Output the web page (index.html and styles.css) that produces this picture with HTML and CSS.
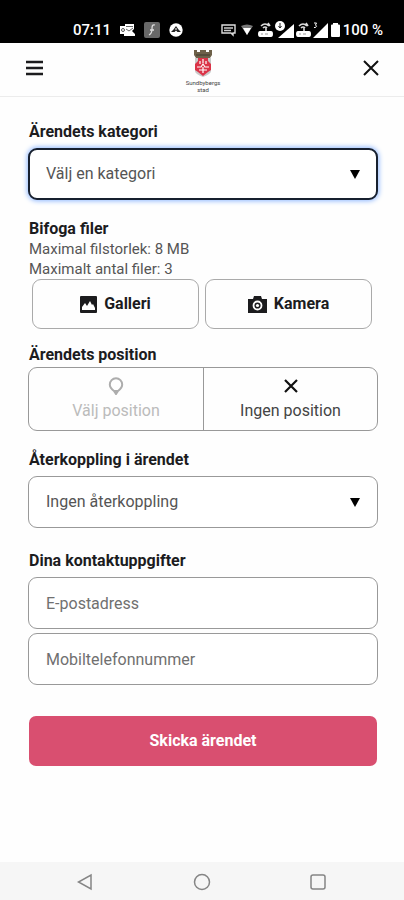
FILE: index.html
```html
<!DOCTYPE html>
<html lang="sv">
<head>
<meta charset="utf-8">
<meta name="viewport" content="width=device-width, initial-scale=1">
<title>Nytt ärende</title>
<link rel="stylesheet" href="styles.css">
</head>
<body>
<div class="status">
  <div class="status-group">
    <span>07:11</span>
    <svg width="15" height="14" viewBox="0 0 15 14"><path fill="#fff" d="M0 3h5V1h9v5l-2 2 3 3v2H4v-2H0z"/><path d="M6 3.500h7M6 6l3 2 4-3" fill="none" stroke="#666"/><circle cx="3" cy="7" r="1.500" fill="none" stroke="#555"/></svg>
    <svg width="16" height="16" viewBox="0 0 16 16"><rect width="16" height="16" rx="2" fill="#686868"/><path d="M11 3c-3-1-3 2-3 4s-1 5-3 6M6 8h4" fill="none" stroke="#ddd" stroke-width="1.3"/></svg>
    <svg width="14" height="14" viewBox="0 0 14 14"><circle cx="7" cy="7" r="6.7" fill="#fff"/><path d="M7 3l2.500 3.500L12 9H8.500L7 7.500 5.500 9H2l2.500-2.500z" fill="#222"/><path d="M7 5v2" stroke="#fff"/></svg>
  </div>
  <div class="status-group status-right">
    <svg width="15" height="14" viewBox="0 0 15 14"><path d="M1 2h13v8h-2v2l-2-2H1z" fill="none" stroke="#ddd" stroke-width="1.4"/><path d="M3 5h9M3 7.500h7" stroke="#ccc" stroke-width="1.3"/></svg>
    <svg class="wifi" width="12" height="12" viewBox="0 0 12 12"><path d="M0 2q6-3 12 0L6 11z" fill="#777"/><path d="M2 4h8l-4 7z" fill="#fff"/></svg>
    <svg width="15" height="15" viewBox="0 0 15 15"><path d="M2 9h11q2 0 2 3t-2 3H2q-2 0-2-3t2-3z" fill="#fff"/><path d="M3 4q4-4 8 0M5 6q2-2 4 0M8 5v4M10 1l2 3" fill="none" stroke="#ddd" stroke-width="1.6"/><path d="M3 12h2M7 12h3" stroke="#999"/></svg>
    <svg width="19" height="18" viewBox="0 0 19 18"><path d="M19 3v14H3z" fill="#fff"/><circle cx="5" cy="5" r="5" fill="#fff"/><path d="M5 2v5M3.500 5L5 7l1.500-2" fill="none" stroke="#222"/></svg>
    <svg width="15" height="15" viewBox="0 0 15 15"><path d="M2 9h11q2 0 2 3t-2 3H2q-2 0-2-3t2-3z" fill="#fff"/><path d="M3 4q4-4 8 0M5 6q2-2 4 0M8 5v4M10 1l2 3" fill="none" stroke="#ddd" stroke-width="1.6"/><path d="M3 12h2M7 12h3" stroke="#999"/></svg>
    <svg width="15" height="16" viewBox="0 0 15 16"><path d="M15 1v15H0z" fill="#fff"/><path d="M1 1h2.500L2.500 3q2 1 0 2.500H1" fill="none" stroke="#fff"/></svg>
    <svg class="battery" width="9" height="14" viewBox="0 0 9 14"><path d="M2 0h5v1.500h1q1 0 1 1V13q0 1-1 1H1q-1 0-1-1V2.500q0-1 1-1h1z" fill="#fff"/></svg>
    <span>100 %</span>
  </div>
</div>

<header class="topbar">
  <button class="icon-button" type="button" aria-label="Meny"><svg width="18" height="16" viewBox="0 0 18 16"><path d="M0 2h17M0 8h17M0 14h17" stroke="#1c1c1e" stroke-width="2.500"/></svg></button>
  <div class="brand">
    <svg width="18" height="27" viewBox="0 0 18 27"><path d="M0 0h3v2h3V0h6v2h3V0h3v5l-2 3H2L0 5z" fill="#6d6049"/><path d="M2 5h14" stroke="#3f382c"/><path d="M1 8h16v13q0 3-8 6-8-3-8-6z" fill="#c9c9c9"/><path d="M4 8h10v3l3 3v6l-3 2-5 4-5-4-3-2v-6l3-3z" fill="#db3448"/><path d="M9 9v4M3 17h4l2-3 2 3h4M5 20h8M9 17v6M6 11v3M12 11v3" fill="none" stroke="#fff" stroke-width="1.200"/></svg>
    <span>Sundbybergs<br>stad</span>
  </div>
  <button class="icon-button" type="button" aria-label="Stäng"><svg width="16" height="16" viewBox="0 0 16 16"><path d="M1 1l14 14M15 1L1 15" stroke="#111" stroke-width="2"/></svg></button>
</header>

<form class="form">
  <section class="group">
    <label class="heading" for="category">Ärendets kategori</label>
    <div class="select-box">
      <select class="field active" id="category"><option>Välj en kategori</option></select>
      <svg width="10" height="10" viewBox="0 0 10 10"><path d="M0 1h10L5 10z"/></svg>
    </div>
  </section>

  <section class="group files">
    <h2 class="heading">Bifoga filer</h2>
    <p>Maximal filstorlek: 8 MB</p>
    <p>Maximalt antal filer: 3</p>
    <div class="file-buttons">
      <button type="button"><svg width="17" height="17" viewBox="0 0 17 17"><path d="M1 0h15q1 0 1 1v15q0 1-1 1H1q-1 0-1-1V1q0-1 1-1z" fill="#1c1c1e"/><path d="M2 14V11l3-4 2 3 3-5 2 4 1-1 2 4v2z" fill="#fff"/></svg>Galleri</button>
      <button type="button"><svg width="19" height="17" viewBox="0 0 19 17"><path d="M0 3h5l1-3h7l1 3h5v14H0z" fill="#1c1c1e"/><circle cx="9.500" cy="9.500" r="4" fill="#1c1c1e" stroke="#fff" stroke-width="1.800"/><circle cx="9.500" cy="9.500" r="1.600" fill="#fff"/></svg>Kamera</button>
    </div>
  </section>

  <section class="group position">
    <h2 class="heading">Ärendets position</h2>
    <div class="segmented">
      <button class="muted" type="button"><svg width="16" height="18" viewBox="0 0 16 18"><path d="M8 1.300a6.200 6.200 0 0 0-6.200 6.200c0 3 2.200 5 4.200 6.500L8 17l2-3c2-1.500 4.200-3.500 4.200-6.500A6.200 6.200 0 0 0 8 1.300z" fill="none" stroke="#adadad" stroke-width="2"/><path d="M5.500 13h5L8 17.500z" fill="#adadad"/></svg>Välj position</button>
      <button type="button"><svg width="16" height="18" viewBox="0 0 16 18"><path d="M2 3l12 12M14 3L2 15" stroke="#111" stroke-width="2.200"/></svg>Ingen position</button>
    </div>
  </section>

  <section class="group feedback">
    <label class="heading" for="feedback">Återkoppling i ärendet</label>
    <div class="select-box">
      <select class="field" id="feedback"><option>Ingen återkoppling</option></select>
      <svg width="10" height="10" viewBox="0 0 10 10"><path d="M0 1h10L5 10z"/></svg>
    </div>
  </section>

  <section class="group contact">
    <h2 class="heading">Dina kontaktuppgifter</h2>
    <input class="field" type="email" placeholder="E-postadress" aria-label="E-postadress">
    <input class="field" type="tel" placeholder="Mobiltelefonnummer" aria-label="Mobiltelefonnummer">
  </section>

  <button class="submit" type="submit">Skicka ärendet</button>
</form>

<nav class="navbar">
  <button type="button" aria-label="Tillbaka"><svg width="18" height="18" viewBox="0 0 18 18"><path d="M15 2v14L2.500 9z"/></svg></button>
  <button type="button" aria-label="Hem"><svg width="18" height="18" viewBox="0 0 18 18"><circle cx="9" cy="9" r="7.500"/></svg></button>
  <button type="button" aria-label="Översikt"><svg width="18" height="18" viewBox="0 0 18 18"><rect x="2" y="2" width="14" height="14" rx="2"/></svg></button>
</nav>
</body>
</html>
```
FILE: styles.css
```css
* {
  box-sizing: border-box;
}

body {
  margin: 0;
  min-height: 100vh;
  display: flex;
  flex-direction: column;
  background: #fefefe;
  color: #1c1c1e;
  font-family: Roboto, "Liberation Sans", sans-serif;
  font-size: 16px;
  line-height: 20px;
}

button,
input,
select {
  font: inherit;
  color: inherit;
}

button {
  margin: 0;
  padding: 0;
  border: 0;
  background: none;
}

svg {
  display: block;
  flex: none;
}

.status {
  display: flex;
  justify-content: space-between;
  padding: 16px 21px 0 73px;
  height: 43px;
  background: #000;
  color: #fff;
  font-size: 15px;
  font-weight: 500;
  line-height: 28px;
}

.status-group {
  display: flex;
  align-items: center;
  gap: 9px;
}

.status-group span {
  white-space: nowrap;
}

.status-right {
  gap: 2px;
}

.status-right .wifi {
  margin: 0 3px;
}

.status-right .battery {
  margin: 0 1px;
}

.topbar {
  display: flex;
  align-items: flex-start;
  justify-content: space-between;
  padding: 7px 23px 0 25px;
  height: 54px;
  border-bottom: 1px solid #ececec;
}

.icon-button {
  display: grid;
  place-items: center;
  width: 20px;
  height: 36px;
}

.brand {
  display: flex;
  flex-direction: column;
  align-items: center;
  gap: 2px;
  color: #444;
  font-size: 6px;
  line-height: 7px;
  text-align: center;
}

.form {
  flex: 1;
  display: flex;
  flex-direction: column;
  gap: 16px;
  padding: 25px 26px 24px 28px;
}

.group {
  display: flex;
  flex-direction: column;
  padding-bottom: 3px;
}

.heading {
  margin: 0 0 6px 1px;
  font-size: 16px;
  font-weight: 700;
  line-height: 20px;
}

.select-box {
  display: grid;
  align-items: center;
}

.select-box > * {
  grid-area: 1 / 1;
}

.select-box svg {
  justify-self: end;
  margin-right: 18px;
  pointer-events: none;
}

.field {
  appearance: none;
  width: 100%;
  height: 52px;
  margin: 0;
  padding: 0 17px;
  border: 1px solid #999;
  border-radius: 9px;
  background: #fff;
  color: #555;
}

.field::placeholder {
  color: #707070;
  opacity: 1;
}

.field.active {
  padding: 0 16px;
  border: 2px solid #17202f;
  box-shadow: 0 0 5px 1px #8fb8ff;
}

.files {
  padding-bottom: 0;
}

.files .heading {
  margin-bottom: 0;
}

.files p {
  margin: 0 0 0 1px;
  color: #555;
  font-size: 15px;
}

.file-buttons {
  display: grid;
  grid-template-columns: 1fr 1fr;
  gap: 6px;
  padding: 0 6px 0 4px;
}

.file-buttons button {
  display: flex;
  align-items: center;
  justify-content: center;
  gap: 7px;
  height: 50px;
  border: 1px solid #aaa;
  border-radius: 9px;
  font-weight: 700;
}

.position .heading,
.contact .heading {
  margin-bottom: 2px;
}

.segmented {
  display: grid;
  grid-template-columns: 1fr 1fr;
  height: 64px;
  border: 1px solid #999;
  border-radius: 9px;
}

.segmented button {
  display: flex;
  flex-direction: column;
  align-items: center;
  justify-content: center;
  gap: 6px;
  color: #444;
}

.segmented button + button {
  border-left: 1px solid #999;
}

.segmented .muted {
  color: #bbb;
}

.feedback {
  padding-bottom: 7px;
}

.contact {
  gap: 4px;
}

.submit {
  margin: 12px 1px 0;
  height: 50px;
  border-radius: 7px;
  background: #d94f70;
  color: #fff;
  font-weight: 700;
}

.navbar {
  display: flex;
  justify-content: space-between;
  align-items: center;
  padding: 2px 77px 0 76px;
  height: 38px;
  background: #f6f6f6;
}

.navbar svg {
  fill: none;
  stroke: #858585;
  stroke-width: 1.5;
}
```
